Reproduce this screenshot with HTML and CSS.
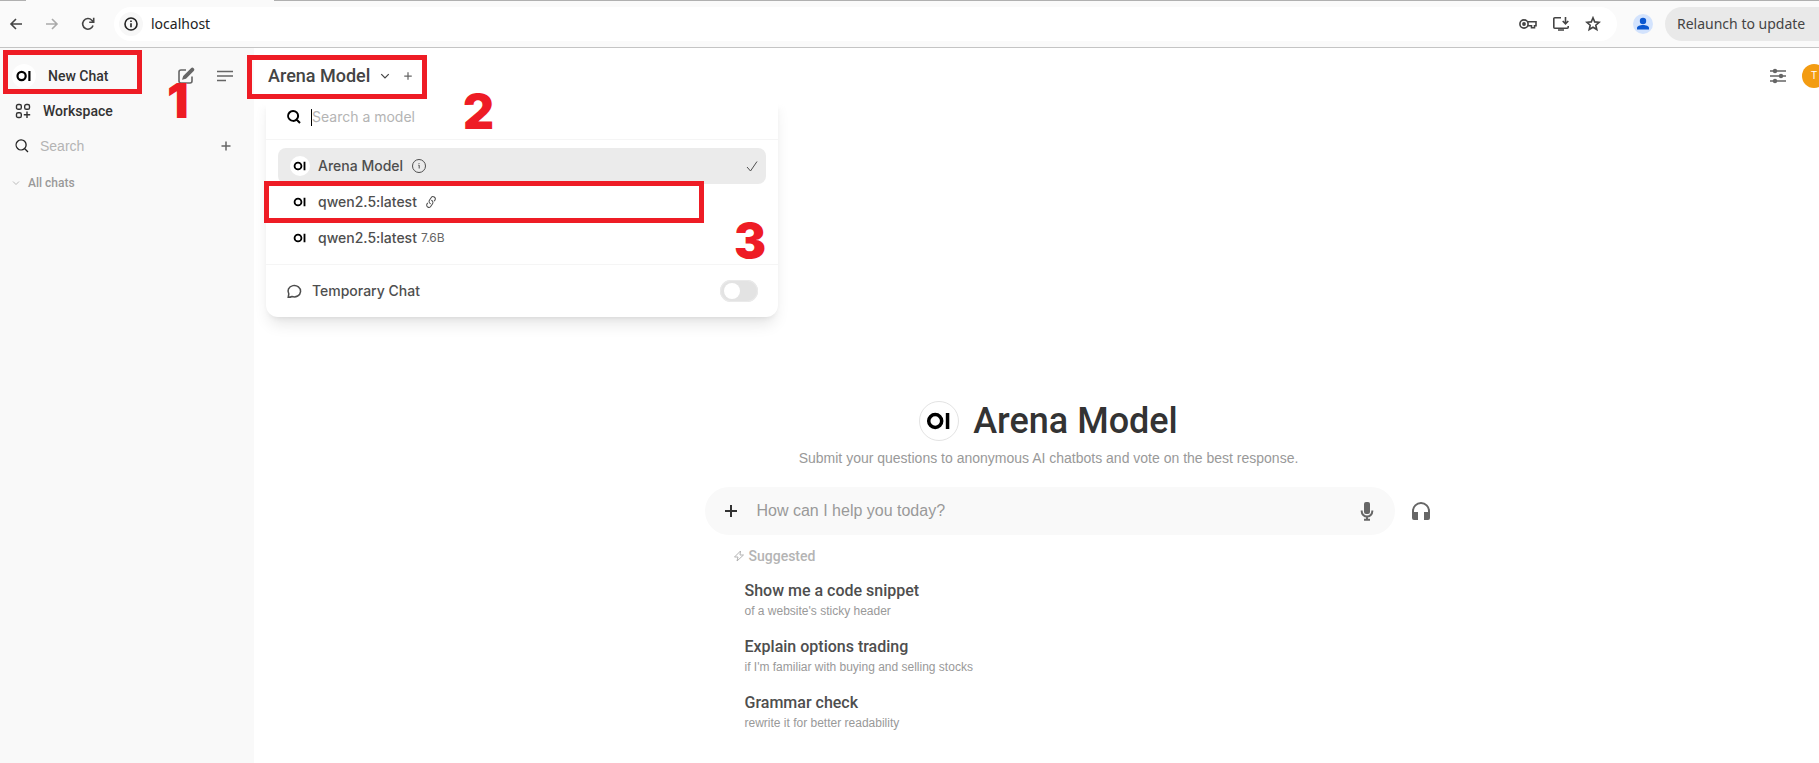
FILE: index.html
```
<!DOCTYPE html>
<html lang="en">
<head>
<meta charset="utf-8">
<title>Open WebUI</title>
<link rel="stylesheet" href="styles.css">
</head>
<body>
<svg class="defs" aria-hidden="true">
  <symbol id="logo" viewBox="0 0 24 24"><circle cx="9.600" cy="12" r="4.100" fill="none" stroke="#000" stroke-width="2.200"/><path d="M17.400 7v10" stroke="#000" stroke-width="2.200"/></symbol>
  <symbol id="search" viewBox="0 0 24 24"><path d="m21 21-5.2-5.2m0 0A7.5 7.5 0 1 0 5.2 5.2a7.5 7.5 0 0 0 10.600 10.600Z"/></symbol>
  <symbol id="plus" viewBox="0 0 16 16"><path d="M8 2v12M2 8h12"/></symbol>
  <symbol id="chevron" viewBox="0 0 16 16"><path d="m2 5 6 6 6-6"/></symbol>
</svg>
<div class="window">
  <div class="toolbar">
    <button class="tool" aria-label="Back"><svg class="icon" viewBox="0 0 16 16"><path d="M14 8H3M8 3 3 8l5 5"/></svg></button>
    <button class="tool dim" aria-label="Forward"><svg class="icon" viewBox="0 0 16 16"><path d="M2 8h11M8 3l5 5-5 5"/></svg></button>
    <button class="tool" aria-label="Reload"><svg class="icon" viewBox="0 0 16 16"><path d="M13 9.500A5.300 5.300 0 1 1 11.800 4.200L13.600 6M13.700 1.800V6.300H9.200"/></svg></button>
    <div class="address">
      <button class="site" aria-label="Site information"><svg class="icon" viewBox="0 0 16 16"><circle cx="8" cy="8" r="6"/><path d="M8 7.200v4M8 4.600v1.400"/></svg></button>
      <input class="url" type="text" value="localhost" aria-label="Address">
      <button class="tool" aria-label="Passwords"><svg class="key" viewBox="0 0 18 16"><circle cx="5" cy="8" r="4.100"/><circle class="solid" cx="5" cy="8" r="1.900"/><path d="M8.500 5.800H17v4h-1.500v2h-3v-2H8.500"/></svg></button>
      <button class="tool" aria-label="Install app"><svg class="icon" viewBox="0 0 16 16"><path d="M8 1.800H1.800a1 1 0 0 0-1 1v8.400a1 1 0 0 0 1 1h12.400a1 1 0 0 0 1-1V10M5 14h6M12.500 1v6.500M9.700 5l2.800 2.800L15.300 5"/></svg></button>
      <button class="tool" aria-label="Bookmark"><svg class="icon" viewBox="0 0 16 16"><path d="m8 1.800 1.700 4.100 4.400.4-3.300 2.900 1 4.300L8 11.200l-3.800 2.300 1-4.300L1.900 6.300l4.400-.4Z"/></svg></button>
    </div>
    <button class="profile" aria-label="Profile"><svg viewBox="0 0 20 20"><circle cx="10" cy="7" r="3.200"/><path d="M4 15.500v-1.500c0-2 3-3 6-3s6 1 6 3v1.500Z"/></svg></button>
    <button class="relaunch">Relaunch to update</button>
  </div>

  <div class="app">
    <aside class="sidebar">
      <div class="row top">
        <a class="new-chat" href="#"><svg class="logo"><use href="#logo"/></svg>New Chat</a>
        <button class="tool" aria-label="Edit"><svg class="mid" viewBox="0 0 18 18"><path d="M9 3H4a2 2 0 0 0-2 2v9a2 2 0 0 0 2 2h9a2 2 0 0 0 2-2V9.500"/><path class="solid" d="M5 12.800 6.200 9 14 1.300a1.700 1.700 0 0 1 2.700 2.600L9 11.700Z"/></svg></button>
        <button class="tool" aria-label="Toggle sidebar"><svg class="mid" viewBox="0 0 18 18"><path d="M1 4.500h16M1 9h16M1 13.500h9"/></svg></button>
      </div>
      <a class="row workspace" href="#"><svg class="icon" viewBox="0 0 16 16"><rect x="1.500" y="1.500" width="4.800" height="4.800" rx="1.600"/><rect x="9.700" y="1.500" width="4.800" height="4.800" rx="1.600"/><rect x="1.500" y="9.700" width="4.800" height="4.800" rx="1.600"/><path d="M12 8.500v6.500M8.800 11.800h6.400"/></svg>Workspace</a>
      <div class="row find">
        <svg class="icon"><use href="#search"/></svg>
        <input type="text" placeholder="Search" aria-label="Search chats">
        <button class="tool" aria-label="New folder"><svg class="add"><use href="#plus"/></svg></button>
      </div>
      <button class="row all"><svg><use href="#chevron"/></svg>All chats</button>
    </aside>

    <main class="main">
      <header class="head">
        <button class="model">Arena Model<svg><use href="#chevron"/></svg></button>
        <button class="tool" aria-label="Add model"><svg class="small"><use href="#plus"/></svg></button>
        <span class="space"></span>
        <button class="tool" aria-label="Controls"><svg class="mid sliders" viewBox="0 0 18 18"><path d="M1 4h16M1 9h16M1 14h16"/><g class="solid"><circle cx="6" cy="4" r="2.200"/><circle cx="12" cy="9" r="2.200"/><circle cx="6" cy="14" r="2.200"/></g></svg></button>
        <button class="avatar">T</button>
      </header>

      <section class="menu">
        <label class="menu-search"><svg class="icon"><use href="#search"/></svg><input type="text" placeholder="Search a model" aria-label="Search a model"><span class="caret"></span></label>
        <div class="options">
          <button class="option selected"><svg class="disc"><use href="#logo"/></svg>Arena Model<svg class="info" viewBox="0 0 16 16"><circle cx="8" cy="8" r="6.500"/><path d="M7.300 7.200h.9v3.300M8 5.200v.8"/></svg><svg class="check" viewBox="0 0 16 16"><path d="m3 9 3.500 4L13 3.500"/></svg></button>
          <button class="option"><svg class="disc"><use href="#logo"/></svg>qwen2.5:latest<svg class="link" viewBox="0 0 24 24"><g transform="rotate(-12 12 12)"><path d="M13.200 8.700a4.500 4.500 0 0 1 1.200 7.200l-4.500 4.500a4.500 4.500 0 0 1-6.400-6.400l1.800-1.700m13.300-.6 1.800-1.700a4.500 4.500 0 0 0-6.400-6.400L9.600 8.100a4.500 4.500 0 0 0 1.200 7.200"/></g></svg></button>
          <button class="option"><svg class="disc"><use href="#logo"/></svg>qwen2.5:latest<small>7.6B</small></button>
        </div>
        <label class="temporary"><svg class="icon" viewBox="0 0 16 16"><path d="M2.200 14.300 2.800 11A6.300 5.700 0 1 1 6 13.500Q4.500 14.300 2.200 14.300Z"/></svg><span>Temporary Chat</span><input type="checkbox" class="switch"></label>
      </section>

      <div class="center">
        <h1><svg class="badge"><use href="#logo"/></svg>Arena Model</h1>
        <p class="lead">Submit your questions to anonymous AI chatbots and vote on the best response.</p>
        <div class="composer">
          <div class="prompt">
            <button class="tool dark" aria-label="More"><svg class="icon"><use href="#plus"/></svg></button>
            <input type="text" placeholder="How can I help you today?" aria-label="Message">
            <button class="tool" aria-label="Record voice"><svg class="big" viewBox="0 0 20 20"><rect class="solid" x="7" y="1" width="6" height="12" rx="2"/><path d="M4.700 9.500v.8a5.300 5.300 0 0 0 10.600 0v-.8M10 15.500v2.800M7 18.700h6"/></svg></button>
          </div>
          <button class="call" aria-label="Call"><svg class="big" viewBox="0 0 20 20"><path d="M2 14v-4a8 8 0 0 1 16 0v4"/><path class="solid" d="M1 11h6v8H3a2 2 0 0 1-2-2ZM19 11h-6v8h4a2 2 0 0 0 2-2Z"/></svg></button>
        </div>
        <div class="suggestions">
          <h2><svg viewBox="0 0 12 12"><path d="M7.500 1 1.500 7H5l-1 4 6.500-6H7Z"/></svg>Suggested</h2>
          <button class="idea"><b>Show me a code snippet</b><span>of a website's sticky header</span></button>
          <button class="idea"><b>Explain options trading</b><span>if I'm familiar with buying and selling stocks</span></button>
          <button class="idea"><b>Grammar check</b><span>rewrite it for better readability</span></button>
        </div>
      </div>
    </main>
  </div>
</div>

<div class="mark mark-one"></div>
<div class="mark mark-two"></div>
<div class="mark mark-three"></div>
<span class="step step-one">1</span>
<span class="step step-two">2</span>
<span class="step step-three">3</span>
</body>
</html>
```
FILE: styles.css
```
* { box-sizing: border-box; }
body {
  margin: 0;
  min-height: 100vh;
  position: relative;
  overflow: hidden;
  background: #fff;
  color: #333;
  font: 14px/20px "Liberation Sans", Arial, sans-serif;
}
button, input { font: inherit; color: inherit; border: 0; padding: 0; margin: 0; background: none; outline: 0; }
button { display: flex; align-items: center; text-align: left; }
a { color: inherit; text-decoration: none; }
input { min-width: 0; }
svg { display: block; flex: none; fill: none; stroke: currentColor; stroke-width: 2; }
.defs { position: absolute; width: 0; height: 0; }
.solid { fill: currentColor; stroke: none; }
.icon { width: 16px; height: 16px; }
.mid { width: 18px; height: 18px; }
.big { width: 20px; height: 20px; }
.tool { color: #666; }

/* The window runs slightly past the right edge of the viewport. */
.window { margin-right: -24px; min-height: 100vh; display: flex; flex-direction: column; }

.toolbar {
  display: flex;
  align-items: center;
  height: 48px;
  padding-left: 8px;
  border-bottom: 1px solid #c4c4c4;
  background: linear-gradient(90deg, #b0b0b0 26px, #fafafa 26px 274px, #b0b0b0 274px) top / 100% 1px no-repeat #fafafa;
  font-family: "Noto Sans", sans-serif;
}
.toolbar svg { stroke-width: 1.600; }
.toolbar .tool { color: #444; margin-right: 20px; }
.toolbar .dim { color: #aaa; }
.address {
  flex: 1;
  display: flex;
  align-items: center;
  height: 34px;
  margin: 0 16px 0 -2px;
  padding: 0 16px 0 5px;
  border-radius: 17px;
  background: #fff;
}
.toolbar .address .tool { margin: 0 0 0 16px; }
.key { width: 18px; height: 16px; }
.site { width: 24px; height: 24px; justify-content: center; border-radius: 12px; background: #f7f7f7; color: #222; }
.url { flex: 1; margin-left: 8px; color: #222; }
.profile { width: 20px; height: 20px; border-radius: 10px; background: #d3e3fd; color: #0b57d0; }
.profile svg { width: 20px; height: 20px; fill: currentColor; stroke: none; }
.relaunch { width: 178px; height: 34px; margin-left: 12px; padding-left: 12px; border-radius: 17px; background: #e9e9e9; color: #444; white-space: nowrap; }

.app { flex: 1; display: flex; }
.sidebar { width: 254px; padding: 10px 20px 0 12px; background: #f9f9f9; }
.row { display: flex; align-items: center; height: 36px; }
.top { height: 35px; color: #333; font-family: Roboto, sans-serif; font-weight: 500; }
.new-chat { flex: 1; display: flex; align-items: center; gap: 12px; }
.logo { width: 24px; height: 24px; border-radius: 12px; background: #fff; }
.top .tool + .tool { margin-left: 21px; }
.top .mid { stroke-width: 1.600; }
.workspace { gap: 12px; padding-left: 3px; color: #333; font-family: Roboto, sans-serif; font-weight: 500; }
.workspace svg { stroke-width: 1.400; }
.find { padding-left: 2px; height: 34px; }
.find input { flex: 1; margin-left: 10px; }
.find .icon { color: #222; }
::placeholder { color: #b4b4b4; opacity: 1; }
.add { width: 12px; height: 12px; margin-right: 2px; }
.all { height: 39px; gap: 8px; color: #999; font: 500 12px/20px Roboto, sans-serif; }
.all svg { width: 8px; height: 8px; color: #bbb; }

.main { flex: 1; min-width: 0; position: relative; }
.head { position: relative; z-index: 2; display: flex; align-items: center; height: 56px; padding: 0 17px 0 14px; background: #fff; }
.head::after { content: ""; position: absolute; inset: 100% 0 auto 0; height: 6px; background: linear-gradient(#fff, #fff0); pointer-events: none; }
.model { gap: 10px; margin-right: 13px; color: #444; font: 500 18px/28px Roboto, sans-serif; }
.model svg { width: 10px; height: 10px; }
.small { width: 10px; height: 10px; }
.space { flex: 1; }
.sliders { stroke-width: 1.600; }
.avatar { width: 24px; height: 24px; margin-left: 15px; justify-content: center; border-radius: 12px; background: #f39c12; color: #fff; font-size: 10px; }

.menu {
  position: absolute;
  z-index: 1;
  top: 44px;
  left: 12px;
  width: 512px;
  border-radius: 12px;
  background: #fff;
  box-shadow: 0 10px 15px -3px #0000001a, 0 4px 6px -4px #0000001a;
  color: #4e4e4e;
  font: 500 14px/20px Inter, sans-serif;
}
.menu-search { display: flex; align-items: center; gap: 10px; height: 48px; padding: 2px 20px 0; border-bottom: 1px solid #f5f5f5; position: relative; font-weight: 400; }
.menu-search .icon { color: #000; stroke-width: 3; }
.menu-search input { flex: 1; }
.caret { position: absolute; left: 45px; top: 17px; width: 1px; height: 17px; background: #000; }
.options { display: grid; padding: 8px 12px; }
.option { height: 36px; padding: 0 6px 0 12px; border-radius: 8px; }
.selected { background: #ebebeb; }
.disc { width: 20px; height: 20px; margin-right: 8px; border-radius: 10px; background: #fff; }
.info { width: 16px; height: 16px; margin-left: 8px; stroke-width: 1; }
.check { width: 16px; height: 16px; margin-left: auto; stroke-width: 1; }
.link { width: 12px; height: 12px; margin-left: 8px; }
.option small { margin-left: 4px; font: 400 12px/20px Inter, sans-serif; color: #666; }
.temporary { display: flex; align-items: center; gap: 10px; height: 53px; padding: 0 20px; border-top: 1px solid #f5f5f5; }
.temporary .icon { stroke-width: 1.500; }
.temporary span { flex: 1; }
.switch { appearance: none; display: grid; align-items: center; width: 38px; height: 22px; padding-left: 4px; border-radius: 11px; background: #e3e3e3; box-shadow: inset 0 0 0 1px #eaeaea; }
.switch::before { content: ""; width: 16px; height: 16px; border-radius: 8px; background: #fff; }

.center { width: 784px; max-width: 100%; margin: 297px auto 0; }
h1 { display: flex; align-items: center; justify-content: center; gap: 14px; margin: 0; color: #333; font: 500 36px/40px Roboto, sans-serif; }
.badge { width: 40px; height: 40px; border: 1px solid #e3e3e3; border-radius: 20px; }
.lead { margin: 7px 0 0; text-align: center; color: #999; }
.composer { display: flex; align-items: center; gap: 8px; margin-top: 19px; padding-left: 48px; }
.prompt { flex: 1; display: flex; align-items: center; height: 48px; padding: 0 18px; border-radius: 24px; background: #f9f9f9; font-size: 16px; }
.prompt input { flex: 1; margin-left: 18px; }
.prompt ::placeholder { color: #999; }
.dark { color: #333; }
.call { width: 36px; height: 36px; margin-right: 2px; justify-content: center; color: #666; }
.suggestions { padding: 11px 0 0 76px; }
h2 { display: flex; align-items: center; gap: 4px; margin: 0 0 13px; color: #b4b4b4; font: 500 14px/20px Roboto, sans-serif; }
h2 svg { width: 12px; height: 12px; stroke-width: 1; }
.idea { display: grid; height: 56px; padding: 0 0 14px 12px; align-content: center; color: #4e4e4e; }
.idea b { font: 500 16px/22px Roboto, sans-serif; }
.idea span { font-size: 12px; line-height: 18px; color: #999; }

/* Walkthrough annotations laid over the page. */
.mark { position: absolute; z-index: 3; border: 5px solid #ee1c25; pointer-events: none; }
.mark-one { left: 3px; top: 50px; width: 139px; height: 44px; }
.mark-two { left: 247px; top: 55px; width: 180px; height: 44px; }
.mark-three { left: 264px; top: 181px; width: 440px; height: 42px; }
.step { position: absolute; z-index: 3; color: #ee1c25; font: 900 48px/48px Inter, sans-serif; }
.step-one { left: 167px; top: 77px; }
.step-two { left: 463px; top: 88px; }
.step-three { left: 734px; top: 217px; }
```
